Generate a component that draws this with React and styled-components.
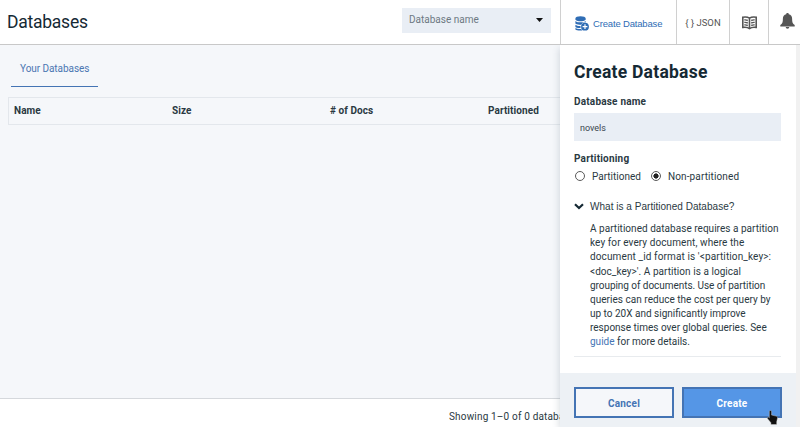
import React from "react";
import styled, { createGlobalStyle, css } from "styled-components";

const Global = createGlobalStyle`
  *, *::before, *::after { box-sizing: border-box; }
  html, body { margin: 0; padding: 0; overflow: hidden; }
  body { font-family: Roboto, "Liberation Sans", sans-serif; color: #2a3942; font-size: 10px; }
  h1, h2, p { margin: 0; font-weight: inherit; }
  button { font-family: inherit; }
`;

const Page = styled.div`
  position: relative;
  width: 800px;
  height: 427px;
  overflow: hidden;
  display: flex;
  flex-direction: column;
  background: #f5f7fa;
`;

const Header = styled.header`
  flex: none;
  display: flex;
  height: 45px;
  background: #fff;
  border-bottom: 1px solid #c8c8c8;
`;

const Title = styled.h1`
  width: 402px;
  padding-left: 7px;
  color: #152934;
  font-size: 17.5px;
  line-height: 45px;
  letter-spacing: -0.25px;
`;

const Select = styled.div`
  display: flex;
  justify-content: space-between;
  align-items: center;
  width: 149px;
  height: 25px;
  margin: 8px 9px 0 0;
  padding: 0 8px 2px 7px;
  background: #e9eef5;
  color: #6d7983;
`;

const HeaderItem = styled.button`
  display: flex;
  align-items: center;
  justify-content: ${(p) => p.$justify || "center"};
  gap: 4px;
  width: ${(p) => p.$width}px;
  height: 44px;
  padding: ${(p) => p.$pad || "0"};
  border: 0;
  border-left: 1px solid #d0d0d0;
  background: #fff;
  color: ${(p) => p.$color || "#555"};
  font-family: ${(p) => p.$font || "Roboto, sans-serif"};
  font-size: 9.5px;
  letter-spacing: ${(p) => p.$spacing || "0"};
  white-space: nowrap;
`;

const Main = styled.main`
  flex: 1;
  padding: 5px 0 0 8px;
`;

const Tab = styled.div`
  width: 87px;
  height: 37px;
  margin-left: 3px;
  border-bottom: 1px solid #4474b4;
  color: #4b76b2;
  line-height: 37px;
  padding-left: 9px;
  letter-spacing: -0.06px;
`;

const TableHead = styled.div`
  display: grid;
  grid-template-columns: 158px 158px 158px 1fr;
  align-items: center;
  height: 28px;
  margin-top: 10px;
  padding: 0 0 1px 5px;
  border: 1px solid #e3e7ec;
  font-weight: 700;
  letter-spacing: 0.08px;
`;

const StatusBar = styled.footer`
  flex: none;
  height: 29px;
  padding-left: 449px;
  border-top: 1px solid #d5d8dc;
  background: #fff;
  line-height: 35px;
  white-space: nowrap;
  letter-spacing: 0.17px;
`;

const Drawer = styled.aside`
  position: absolute;
  top: 45px;
  left: 560px;
  width: 236px;
  height: 382px;
  display: flex;
  flex-direction: column;
  background: #fff;
  box-shadow: -1px 3px 7px rgba(70, 90, 110, 0.2);
  clip-path: inset(0 0 0 -12px);
`;

const DrawerBody = styled.div`
  flex: 1;
  padding: 16px 15px 0 14px;
`;

const DrawerTitle = styled.h2`
  color: #152934;
  font-size: 17.5px;
  line-height: 23px;
  font-weight: 700;
  letter-spacing: 0.25px;
`;

const FieldLabel = styled.div`
  margin-top: ${(p) => p.$top}px;
  line-height: 14px;
  font-weight: 700;
  letter-spacing: 0.2px;
`;

const Field = styled.input`
  display: block;
  width: 207px;
  height: 28px;
  margin-top: 4px;
  padding: 2px 6px 0;
  border: 0;
  background: #e9eef5;
  color: #39464f;
  font: 9px Roboto, sans-serif;
`;

const Choices = styled.div`
  display: flex;
  align-items: center;
  height: 14px;
  margin-top: 3px;
`;

const Choice = styled.label`
  display: flex;
  align-items: center;
  gap: 7px;
  width: 76px;
  padding-top: 1px;
  white-space: nowrap;
  letter-spacing: ${(p) => p.$spacing || "0"};
`;

const Dot = styled.span`
  flex: none;
  width: 10px;
  height: 10px;
  margin: 0 0 2px 1px;
  border: 1px solid #5a5a5a;
  border-radius: 50%;
  ${(p) => p.$on && css`background: radial-gradient(circle, #222 0 2.3px, #fff 2.9px);`}
`;

const Disclosure = styled.div`
  display: flex;
  align-items: center;
  gap: 6px;
  height: 16px;
  margin-top: 15px;
  font-family: "Liberation Sans", sans-serif;
  letter-spacing: 0.03px;
  white-space: nowrap;
`;

const Explanation = styled.p`
  height: 135px;
  margin-top: 8px;
  padding: 0 0 0 16px;
  border-bottom: 1px solid #e8ebee;
  line-height: 14.17px;
  white-space: nowrap;
`;

const Line = styled.span`
  display: block;
  letter-spacing: ${(p) => p.$spacing || 0}px;
`;

const Link = styled.a`
  color: #4474b4;
`;

const DrawerFooter = styled.div`
  flex: none;
  display: flex;
  gap: 8px;
  height: 54px;
  padding: 14px 0 0 14px;
  background: #edf1f5;
`;

const Action = styled.button`
  width: 100px;
  height: 31px;
  border: 2px solid #4474b4;
  background: ${(p) => (p.$primary ? "#5596e6" : "#f5f7fa")};
  color: ${(p) => (p.$primary ? "#fff" : "#4474b4")};
  font-size: 10px;
  font-weight: 700;
  letter-spacing: 0.2px;
  padding: 1px 0 0;
`;

const ScrollTrack = styled.div`
  position: absolute;
  top: 45px;
  right: 0;
  width: 4px;
  height: 382px;
  background: #f1f1f1;
`;

const Pointer = styled.svg`
  position: absolute;
  left: 767px;
  top: 410px;
`;

const DatabaseIcon = () => (
  <svg width="14" height="15" viewBox="0 0 14 15">
    <path fill="#2f6db5" d="M.4 2.400C.4 1.100 2.700.2 5.500.2s5.200.9 5.200 2.200v1.400C9.600 5 7.200 5.300 5.500 5.300S1.400 5 .4 3.800zM.4 4.900c1.300 1.200 3.200 1.400 5.100 1.400s3.900-.2 5.200-1.400v1.500A4.300 4.300 0 0 0 6.200 8.700C3.200 9 1.200 8.500.4 7.600zM.4 8.700c1.300 1 3.100 1.300 5.100 1.200L5.600 12C3.200 12.200 1.200 11.900.4 11.100zM.4 12.100c1.300.9 3.300 1.200 5.700.9l1.400 1.500C4.200 14.800 1.200 14.500.4 13.500z" />
    <circle cx="10" cy="10.700" r="3.900" fill="#2f6db5" />
    <path d="M10 8.300v4.800M7.600 10.700h4.800" stroke="#fff" strokeWidth="1.200" />
  </svg>
);

const BookIcon = () => (
  <svg width="15" height="14" viewBox="0 0 15 14" fill="none" stroke="#555">
    <path strokeWidth="1.600" d="M7.500 2.200C5.700.9 3.200.8.8 1.200v10.200c2.400-.4 4.900-.2 6.700 1.200 1.800-1.400 4.300-1.600 6.700-1.200V1.200C11.800.8 9.300.9 7.500 2.200zv10.400" />
    <path strokeWidth="1.400" d="M2.300 3.900q1.800-.2 3.500.6M2.300 6.400q1.800-.2 3.500.6M2.300 8.900q1.800-.2 3.500.6M12.700 3.900q-1.800-.2-3.500.6M12.700 6.400q-1.800-.2-3.500.6M12.700 8.900q-1.800-.2-3.500.6" />
  </svg>
);

const BellIcon = () => (
  <svg width="15" height="16" viewBox="0 0 15 16" fill="#555">
    <path d="M7.500 0c.8 0 1.300.5 1.300 1.200 2.100.6 3.300 2.100 3.300 4.400 0 3.700.5 5.500 2.600 6.500v1.400H.3v-1.400c2.100-1 2.600-2.800 2.600-6.500 0-2.300 1.200-3.800 3.300-4.400C6.200.5 6.700 0 7.500 0z" />
    <path d="M5.700 14h3.600a1.800 1.800 0 0 1-3.600 0z" />
  </svg>
);

const columns = ["Name", "Size", "# of Docs", "Partitioned"];

const lines = [
  ["A partitioned database requires a partition", 0.03],
  ["key for every document, where the", 0.09],
  ["document _id format is '<partition_key>:", 0.12],
  ["<doc_key>'. A partition is a logical", 0.05],
  ["grouping of documents. Use of partition", -0.05],
  ["queries can reduce the cost per query by", 0.03],
  ["up to 20X and significantly improve", 0.0],
  ["response times over global queries. See", 0.0],
];

export default function App() {
  return (
    <>
      <Global />
      <Page>
        <Header>
          <Title>Databases</Title>
          <Select>
            Database name
            <svg width="7" height="4" viewBox="0 0 7 4"><path d="M0 0h7L3.500 4z" fill="#111" /></svg>
          </Select>
          <HeaderItem $width={116} $color="#2f6db5" $pad="2px 0 0 14px" $justify="flex-start" $font={'"Liberation Sans", sans-serif'} $spacing="-0.17px"><DatabaseIcon />Create Database</HeaderItem>
          <HeaderItem $width={53}>{"{ } JSON"}</HeaderItem>
          <HeaderItem $width={39} $pad="1px 0 0"><BookIcon /></HeaderItem>
          <HeaderItem $width={32} $pad="0 0 2px 11px" $justify="flex-start"><BellIcon /></HeaderItem>
        </Header>
        <Main>
          <Tab>Your Databases</Tab>
          <TableHead>{columns.map((c) => <span key={c}>{c}</span>)}</TableHead>
        </Main>
        <StatusBar>Showing 1–0 of 0 databases.</StatusBar>
        <Drawer>
          <DrawerBody>
            <DrawerTitle>Create Database</DrawerTitle>
            <FieldLabel $top={11}>Database name</FieldLabel>
            <Field defaultValue="novels" />
            <FieldLabel $top={11}>Partitioning</FieldLabel>
            <Choices>
              <Choice><Dot />Partitioned</Choice>
              <Choice $spacing="0.12px"><Dot $on />Non-partitioned</Choice>
            </Choices>
            <Disclosure>
              <svg width="10" height="7" viewBox="0 0 10 7"><path d="M1 1.200 5 5l4-3.800" fill="none" stroke="#152934" strokeWidth="2.200" /></svg>
              What is a Partitioned Database?
            </Disclosure>
            <Explanation>
              {lines.map(([text, spacing]) => <Line key={text} $spacing={spacing}>{text}</Line>)}
              <Line><Link>guide</Link> for more details.</Line>
            </Explanation>
          </DrawerBody>
          <DrawerFooter>
            <Action>Cancel</Action>
            <Action $primary>Create</Action>
          </DrawerFooter>
        </Drawer>
        <ScrollTrack />
        <Pointer width="11" height="15" viewBox="0 0 11 15">
          <path d="M2.300 1.600c0-1.500 2.300-1.500 2.300 0v3.500l4.600 1c1.100.3 1.500 1 1.300 2.100l-.8 3.600v2.700H3.900v-1.800L.6 8.700C-.2 7.500 1 6.700 1.700 7.300l.6.600z" fill="#111" stroke="#ddd" strokeWidth=".4" />
        </Pointer>
      </Page>
    </>
  );
}
